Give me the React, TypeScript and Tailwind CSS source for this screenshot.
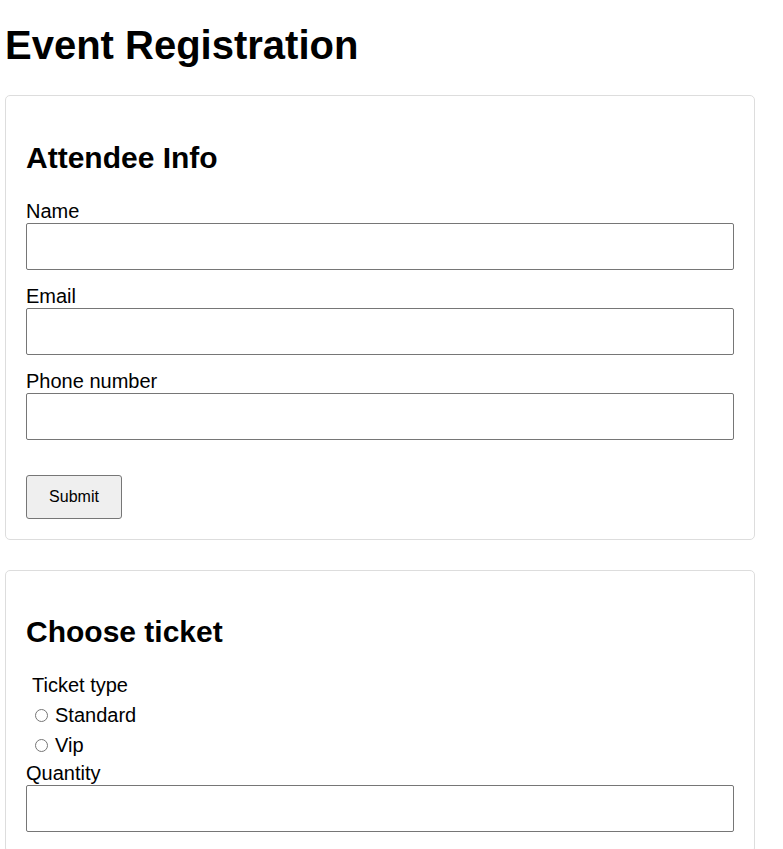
import React from "react";

function Field({ label, last }: { label: string; last?: boolean }) {
  return (
    <div className={last ? "" : "mb-[15px]"}>
      <label className="block text-[20px] leading-[23px]">{label}</label>
      <input
        type="text"
        className="block w-full h-[47px] border border-[#767676] rounded-[2px] bg-white px-2 text-[20px] outline-none"
      />
    </div>
  );
}

function Radio({ label, rowClass }: { label: string; rowClass: string }) {
  return (
    <label className={"flex items-start text-[20px] leading-[23px] " + rowClass}>
      <input
        type="radio"
        name="ticket"
        className="appearance-none shrink-0 ml-[9px] mr-[7px] mt-[5px] w-[13px] h-[13px] rounded-full border border-[#767676] bg-white"
      />
      {label}
    </label>
  );
}

export default function App() {
  return (
    <div
      className="min-h-screen bg-white text-black pl-[5px] pb-[40px]"
      style={{ fontFamily: '"Liberation Sans", Arial, sans-serif' }}
    >
      <h1 className="text-[40px] leading-[46px] font-bold pt-[22px] mb-[27px]">
        Event Registration
      </h1>

      <section className="w-[750px] border border-[#dddddd] rounded-[5px] p-[20px]">
        <h2 className="text-[30px] leading-[34px] font-bold mt-[25px] mb-[25px]">
          Attendee Info
        </h2>
        <Field label="Name" />
        <Field label="Email" />
        <Field label="Phone number" last />
        <button
          type="button"
          className="mt-[35px] w-[96px] h-[44px] bg-[#efefef] border border-[#767676] rounded-[3px] text-[16px] leading-[18px]"
        >
          Submit
        </button>
      </section>

      <section className="mt-[30px] w-[750px] border border-[#dddddd] rounded-[5px] p-[20px]">
        <h2 className="text-[30px] leading-[34px] font-bold mt-[24px] mb-[25px]">
          Choose ticket
        </h2>
        <fieldset>
          <div className="h-[30px] pl-[6px] text-[20px] leading-[23px]">Ticket type</div>
          <Radio label="Standard" rowClass="h-[30px]" />
          <Radio label="Vip" rowClass="h-[28px]" />
        </fieldset>
        <Field label="Quantity" last />
      </section>
    </div>
  );
}
